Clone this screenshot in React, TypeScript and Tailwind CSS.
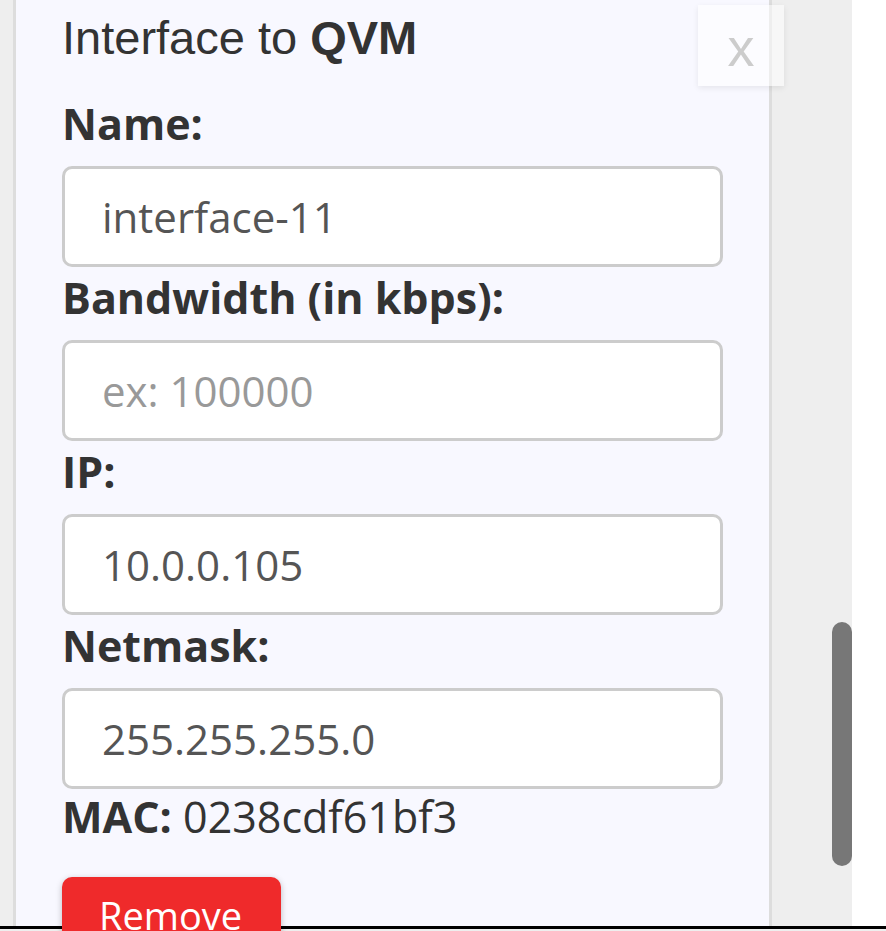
import React from "react";

const FIELDS = [
  { label: "Name:", value: "interface-11", placeholder: "" },
  { label: "Bandwidth (in kbps):", value: "", placeholder: "ex: 100000" },
  { label: "IP:", value: "10.0.0.105", placeholder: "" },
  { label: "Netmask:", value: "255.255.255.0", placeholder: "" },
];

export default function App() {
  return (
    <div className="relative h-[931px] w-[886px] overflow-hidden bg-white">
      <div className="flex h-[926px]">
        {/* left gutter */}
        <div className="w-[16px] shrink-0 border-r-[3px] border-[#dddddd] bg-[#eeeeee]" />

        {/* panel */}
        <div className="w-[756px] shrink-0 border-r-[3px] border-[#dddddd] bg-[#f8f8ff] pl-[46px]">
          <h2
            className="pt-[11px] text-[47px] leading-[53px] text-[#333333]"
            style={{ fontFamily: '"Liberation Sans", Arial, sans-serif' }}
          >
            Interface to <b>QVM</b>
          </h2>

          <div style={{ fontFamily: '"Open Sans", sans-serif' }}>
            {FIELDS.map((f, i) => (
              <div key={f.label} className={i === 0 ? "mt-[32px]" : "mt-[3px]"}>
                <label className="block text-[43px] font-bold leading-[56px] text-[#333333]">
                  {f.label}
                </label>
                <input
                  readOnly
                  value={f.value}
                  placeholder={f.placeholder}
                  className="mt-[14px] block h-[101px] w-[661px] rounded-[10px] border-[3px] border-[#cccccc] bg-white pl-[37px] text-[42px] text-[#555555] placeholder:text-[#999999] outline-none"
                />
              </div>
            ))}

            <p className="text-[43px] leading-[56px] text-[#333333]">
              <b>MAC:</b> 0238cdf61bf3
            </p>

            <button className="mt-[32px] h-[90px] w-[219px] rounded-[10px] bg-[#ef2a2b] pl-[37px] pt-[12px] text-left text-[38px] leading-[52px] text-white shadow-[0_2px_6px_rgba(0,0,0,0.25)] self-start flex items-start">
              Remove
            </button>
          </div>
        </div>

        {/* right gutter with scroll thumb */}
        <div className="flex w-[80px] shrink-0 justify-end bg-[#eeeeee] pt-[622px]">
          <div className="h-[244px] w-[20px] rounded-[10px] bg-[#777777]" />
        </div>
        <div className="flex-1 bg-white" />
      </div>

      <div className="h-[3px] w-full bg-black" />
      <div className="h-[2px] w-full bg-[#eeeeee]" />

      {/* close button */}
      <button
        className="absolute left-[698px] top-[5px] flex h-[81px] w-[86px] items-center justify-center bg-white/50 pt-[2px] text-[54px] leading-[54px] text-[#cccccc] shadow-[0_2px_6px_rgba(0,0,0,0.08)]"
        style={{ fontFamily: '"Liberation Sans", Arial, sans-serif' }}
      >
        x
      </button>
    </div>
  );
}
